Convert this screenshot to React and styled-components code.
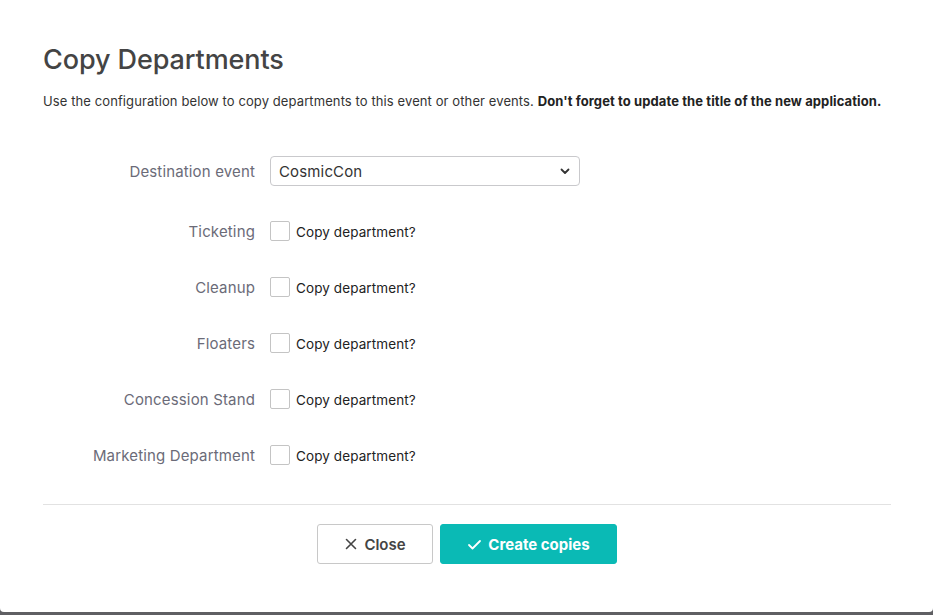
import React from 'react';
import styled, { createGlobalStyle } from 'styled-components';

const GlobalStyle = createGlobalStyle`
  html, body {
    margin: 0;
    padding: 0;
    background: #5f5f63;
    font-family: Inter, "Noto Sans", sans-serif;
  }
`;

const Modal = styled.div`
  box-sizing: border-box;
  width: 933px;
  height: 612px;
  background: #fff;
  border-radius: 0 0 4px 4px;
  padding: 42px 42px 0 43px;
  display: flex;
  flex-direction: column;
`;

const Title = styled.h2`
  margin: 0;
  font-size: 27px;
  font-weight: 500;
  color: #444;
  letter-spacing: -0.1px;
  line-height: 36px;
`;

const Description = styled.p`
  margin: 15px 0 0;
  font-size: 13px;
  color: #333;
  letter-spacing: 0.1px;
  line-height: 16px;

  strong {
    font-weight: 700;
    color: #222;
  }
`;

const Form = styled.div`
  margin-top: 47px;
  display: flex;
  flex-direction: column;
  gap: 26px;
`;

const Row = styled.div`
  display: grid;
  grid-template-columns: 212px 1fr;
  column-gap: 15px;
  align-items: center;
  min-height: 30px;
  margin-bottom: ${(p) => (p.$spaced ? '4px' : '0')};
`;

const Label = styled.label`
  text-align: right;
  font-size: 15px;
  color: #6b6b78;
  letter-spacing: 0.15px;
`;

const SelectBox = styled.div`
  width: 310px;
  height: 30px;
  box-sizing: border-box;
  border: 1px solid #c9c9cc;
  border-radius: 4px;
  display: flex;
  align-items: center;
  padding: 0 8px;
  font-size: 15px;
  color: #333;
  letter-spacing: 0.15px;
`;

const Chevron = styled.svg`
  margin-left: auto;
  width: 12px;
  height: 12px;
`;

const CheckWrap = styled.div`
  display: flex;
  align-items: center;
  gap: 6px;
`;

const Box = styled.span`
  width: 20px;
  height: 20px;
  box-sizing: border-box;
  border: 1px solid #c4c4c4;
  border-radius: 2px;
  background: #fff;
`;

const CheckText = styled.span`
  font-size: 13.5px;
  color: #222;
  letter-spacing: 0.1px;
  margin-top: 2px;
`;

const Divider = styled.hr`
  margin: 34px 0 0;
  border: 0;
  border-top: 1px solid #e2e2e2;
`;

const Footer = styled.div`
  display: flex;
  justify-content: center;
  gap: 7px;
  margin-top: 19px;
`;

const Button = styled.button`
  height: 40px;
  box-sizing: border-box;
  border-radius: 3px;
  display: flex;
  align-items: center;
  justify-content: center;
  gap: 6px;
  font-family: inherit;
  font-size: 15px;
  font-weight: ${(p) => (p.$primary ? 700 : 600)};
  letter-spacing: 0;
  width: ${(p) => (p.$primary ? '177px' : '116px')};
  background: ${(p) => (p.$primary ? '#0abab5' : '#fff')};
  color: ${(p) => (p.$primary ? '#fff' : '#444')};
  border: 1px solid ${(p) => (p.$primary ? '#0abab5' : '#c8c8c8')};
  cursor: pointer;
`;

const departments = [
  'Ticketing',
  'Cleanup',
  'Floaters',
  'Concession Stand',
  'Marketing Department',
];

export default function App() {
  return (
    <>
      <GlobalStyle />
      <Modal>
        <Title>Copy Departments</Title>
        <Description>
          Use the configuration below to copy departments to this event or other events.{' '}
          <strong>Don't forget to update the title of the new application.</strong>
        </Description>
        <Form>
          <Row $spaced>
            <Label>Destination event</Label>
            <SelectBox>
              CosmicCon
              <Chevron viewBox="0 0 12 12" fill="none">
                <path d="M2.5 4.5 6 8l3.5-3.5" stroke="#333" strokeWidth="1.8" strokeLinecap="round" strokeLinejoin="round" />
              </Chevron>
            </SelectBox>
          </Row>
          {departments.map((d) => (
            <Row key={d}>
              <Label>{d}</Label>
              <CheckWrap>
                <Box />
                <CheckText>Copy department?</CheckText>
              </CheckWrap>
            </Row>
          ))}
        </Form>
        <Divider />
        <Footer>
          <Button>
            <svg width="14" height="14" viewBox="0 0 14 14" fill="none">
              <path d="M2.5 2.5l9 9M11.5 2.5l-9 9" stroke="#444" strokeWidth="1.6" strokeLinecap="round" />
            </svg>
            Close
          </Button>
          <Button $primary>
            <svg width="15" height="15" viewBox="0 0 15 15" fill="none">
              <path d="M2 8l3.5 3.5L13 4" stroke="#fff" strokeWidth="1.8" strokeLinecap="round" strokeLinejoin="round" />
            </svg>
            Create copies
          </Button>
        </Footer>
      </Modal>
    </>
  );
}
